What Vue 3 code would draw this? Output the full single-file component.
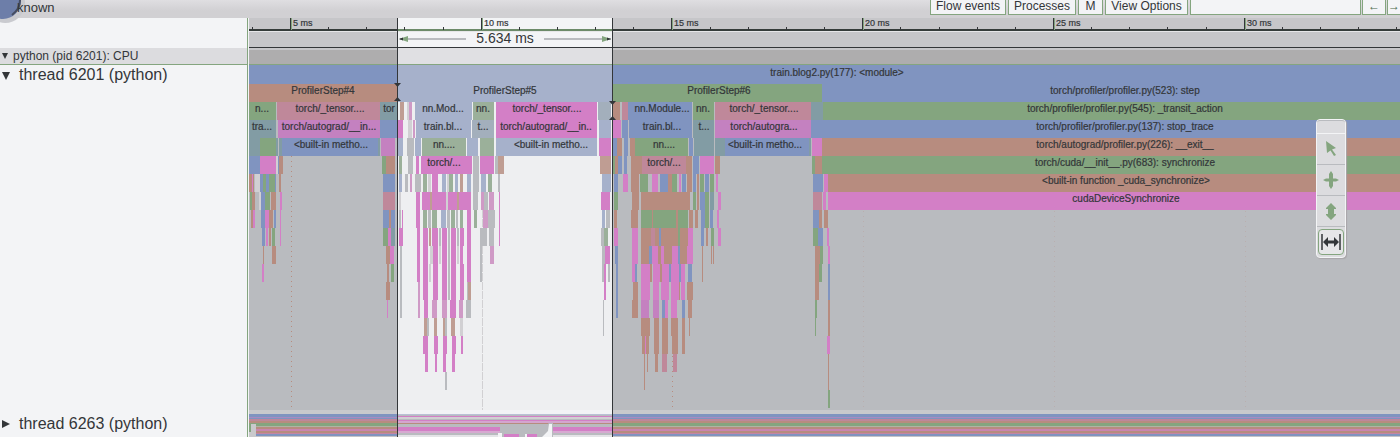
<script setup>
import { ref } from 'vue'

const originX = 249
const rowHeight = 18
const rowsTop = 66

const colors = {
  b: '#8094c0', g: '#84a57f', n: '#b78c7f', p: '#d37fc6',
  t: '#829ca4', o: '#bf889a', q: '#c481c0',
  B: '#a6b1cb', G: '#9bb09a', N: '#bf9d93', P: '#d37fc6', Q: '#cf9ac6', T: '#a3afbc',
  s: '#b9bbbf', l: '#d1d0d3', w: '#f3f4f6'
}

const rows = [
  'b249-397 B398-612 b613-4000',
  'n249-397 B398-612 g613-822 b822-4000',
  'g249-276 o277-380 t380-397 N400-404 l407-409 Q409-412 B415-472 G473-494 P496-597 T598-611 n613-620 s620-622 o622-628 b628-692 g693-714 o715-811 t811-823 g823-4000',
  't249-276 q278-380 b380-397 P398-403 l408-412 Q413-415 B416-471 T472-494 P496-597 B599-611 p613-621 b622-628 b629-692 t693-714 q715-811 b811-4000',
  't249-260 g260-276 t276-278 t279-380 b282-378 q381-395 B398-403 s407-414 B415-421 G422-466 B467-478 G480-494 B496-597 P599-611 b613-617 n617-622 b624-628 n630-640 g635-688 b689-693 t694-714 t715-811 b725-809 p812-822 n822-4000',
  'b249-260 p260-276 l276-278 b278-279 n279-283 n382-395 g382-386 G399-402 s408-413 P416-419 P421-472 s473-479 P480-494 s495-498 N498-504 N600-611 g613-615 n615-618 b618-622 b624-627 n631-692 o642-686 b693-699 p700-714 n715-720 g812-815 n815-822 g822-4000',
  'n249-254 p252-253 l255-260 b260-276 g263-266 g269-275 n279-281 b383-395 B399-402 s405-408 Q410-412 s415-421 G423-427 l428-431 P432-438 B442-446 l447-449 G449-453 B455-458 N460-463 B467-471 s473-479 B481-486 G488-492 s498-500 B602-611 b614-618 p623-628 n631-639 g640-648 p652-658 b660-668 n668-672 g672-677 p679-681 b682-686 n687-692 b693-696 n697-699 g700-704 b705-709 g710-714 p716-718 b813-823 p824-828 n828-4000',
  'g250-252 n252-255 l259-261 b261-265 g265-270 n271-276 p280-282 o383-395 l399-401 P416-420 P422-471 N430-432 l446-448 N457-459 s473-478 Q481-484 s484-488 Q489-494 P499-500 P601-610 g614-618 n632-639 n641-690 g693-696 n697-699 b700-705 g705-709 t710-714 p718-721 o813-822 p823-826 p828-4000',
  'n251-253 p253-255 b261-265 p265-269 n269-273 b274-276 p280-281 b383-395 n389-391 s399-401 P402-403 P416-420 G423-427 s428-431 G432-437 B441-446 s447-450 G451-455 s456-458 G460-463 P467-471 G474-477 Q483-488 s488-495 P499-500 B602-605 s606-610 n614-617 s617-619 n631-638 g641-688 n652-653 n676-678 n689-693 n695-698 b701-705 g705-709 b710-713 p717-719 b813-819 n819-822 n824-828',
  'b262-265 p266-268 n269-271 g272-275 p280-281 g383-388 p388-391 t391-395 P399-403 P417-420 P423-428 N429-431 P432-438 s439-441 P442-447 s448-450 P451-456 s457-459 P460-464 P467-471 s480-487 s489-494 P499-500 s601-604 G604-608 p614-618 p632-638 n641-688 o651-655 b659-661 g678-680 p688-693 b701-704 n706-708 g711-714 p718-721 g813-818 b818-823 p827-829',
  'n263-264 n272-276 n386-392 p390-394 s400-402 P417-420 P423-428 l430-433 P433-438 l439-441 P442-447 s448-450 P451-456 l457-459 P460-463 P467-471 s480-482 Q490-494 s602-605 P605-610 b615-618 p632-638 n641-688 p652-658 b649-652 p661-664 p672-678 b678-680 p687-693 n702-703 n711-712 n713-714 n815-820 g820-823 p828-830',
  'p262-264 n387-389 g391-394 s400-402 P417-420 P423-428 l429-431 P433-438 P442-447 s448-450 P451-456 P460-464 P467-471 s480-482 s602-606 P604-606 s608-610 b616-618 p632-635 b635-637 p641-650 n650-652 p653-660 n660-662 p662-669 b669-671 p671-679 b679-681 p681-685 b688-692 n702-703 n815-819 g819-822 b828-830',
  'n386-390 s400-402 Q418-420 P423-428 P433-438 P442-447 s448-450 P451-456 P460-464 s467-469 N468-471 P604-606 b616-618 n633-638 p641-650 p653-659 p661-669 p671-679 n679-680 p681-685 n687-693 n815-819 b828-830',
  'p387-388 s400-402 Q418-420 P424-428 Q432-437 Q442-447 P450-456 Q459-463 s466-471 s603-604 b616-618 n632-638 q641-649 q653-659 b662-665 p665-668 p671-677 b682-685 n688-692 g815-817 n828-830',
  'N424-427 s427-429 N434-437 N443-445 s445-447 N451-455 l460-463 s603-604 n641-650 n654-659 n662-668 n671-678 n682-685 n689-690 g815-816 n828-830',
  'P423-428 P434-438 P443-447 P452-456 P461-463 n642-649 p645-646 n654-659 n662-668 n672-678 n682-685 p827-830',
  'P425-428 P435-437 P443-446 P452-455 n644-645 n647-648 n655-658 o662-667 o673-677 n828-829',
  's445-447 n644-645 n828-829',
  'g828-830'
]

const slices = rows.flatMap((line, row) =>
  line.split(' ').map((token) => {
    const [x1, x2] = token.slice(1).split('-').map(Number)
    const y = row === 0 ? 65 : rowsTop + row * rowHeight
    return { x: x1, w: x2 - x1, y, h: row === 0 ? 19 : rowHeight, fill: colors[token[0]] }
  })
)

const titles = [
  [0, 837, 'train.blog2.py(177): <module>'],
  [1, 323, 'ProfilerStep#4'], [1, 505, 'ProfilerStep#5'], [1, 719, 'ProfilerStep#6'],
  [1, 1125, 'torch/profiler/profiler.py(523): step'],
  [2, 262, 'n...'], [2, 330, 'torch/_tensor....'], [2, 389, 'tor'],
  [2, 443, 'nn.Mod...'], [2, 483, 'nn.'], [2, 547, 'torch/_tensor....'],
  [2, 662, 'nn.Module...'], [2, 703, 'nn.'], [2, 764, 'torch/_tensor....'],
  [2, 1125, 'torch/profiler/profiler.py(545): _transit_action'],
  [3, 262, 'tra...'], [3, 329, 'torch/autograd/__in...'],
  [3, 443, 'train.bl...'], [3, 483, 't...'], [3, 546, 'torch/autograd/__in..'],
  [3, 662, 'train.bl...'], [3, 704, 't...'], [3, 764, 'torch/autogra...'],
  [3, 1125, 'torch/profiler/profiler.py(137): stop_trace'],
  [4, 331, '<built-in metho...'], [4, 444, 'nn....'], [4, 551, '<built-in metho...'],
  [4, 664, 'nn....'], [4, 765, '<built-in metho...'],
  [4, 1125, 'torch/autograd/profiler.py(226): __exit__'],
  [5, 444, 'torch/...'], [5, 664, 'torch/...'],
  [5, 1125, 'torch/cuda/__init__.py(683): synchronize'],
  [6, 1126, '<built-in function _cuda_synchronize>'],
  [7, 1126, 'cudaDeviceSynchronize']
].map(([row, x, text]) => ({ x, y: rowsTop + row * rowHeight + 10, text }))

const tickStep = 38.15
const ticks = Array.from({ length: 60 }, (_, i) => {
  const major = i % 5 === 1
  return { x: Math.round(252.8 + i * tickStep), major, label: major ? `${5 + (i - 1)} ms` : '' }
}).filter((t) => t.x < 1400 || !t.major)
const majors = ticks.filter((t) => t.major)
const gridColor = (x) => (x > 398 && x < 612 ? '#d1d0d3' : x < 700 ? '#b78c7f' : '#b9aeae')

const collapsedBands = [
  [410, 4, '#c9c9cc'], [414, 3, '#8094c0'], [417, 1, '#a98ac2'], [418, 1, '#8094c0'],
  [419, 2, '#bd889b'], [421, 2, '#b78c7f'], [423, 3, '#84a57f'], [426, 1, '#b0b3a4'],
  [427, 2, '#b78c7f'], [429, 2, '#c985b0'], [431, 2, '#b78c7f'], [433, 1, '#c485a4'],
  [434, 2, '#8094c0'], [436, 1, '#c4c4c8']
]
const selectedBands = [
  [410, 4, '#f3f4f6'], [414, 1, '#b9c1d6'], [415, 1, '#b9bbbf'], [416, 1, '#d37fc6'], [417, 2, '#d1d0d3'],
  [419, 1, '#b9bbbf'], [420, 1, '#d37fc6'], [421, 2, '#d3a6ce'], [423, 1, '#b78c7f'],
  [424, 3, '#b9bbbf'], [427, 4, '#d37fc6'], [431, 2, '#d6aad1'], [433, 2, '#b9bbbf'], [435, 2, '#e4e4e7']
]

const search = ref('')
const mode = ref('timing')
</script>

<template>
  <main class="viewer">
    <header class="toolbar">
      <svg class="badge" width="26" height="24" aria-hidden="true">
        <circle cx="5" cy="3" r="20" fill="#c9cacf" />
        <ellipse cx="3" cy="0" rx="18" ry="19" fill="#6d7ea9" />
        <path d="M20 0Q20 9 12 15" fill="none" stroke="#444c61" stroke-width="2" />
      </svg>
      <span class="title">known</span>
      <nav class="actions">
        <button type="button" class="flow">Flow events</button>
        <button type="button" class="processes">Processes</button>
        <button type="button" class="metadata">M</button>
        <button type="button" class="options">View Options</button>
        <input v-model="search" type="text" aria-label="Search" />
        <button type="button" class="previous" aria-label="Previous match">←</button>
        <button type="button" class="next" aria-label="Next match">→</button>
      </nav>
    </header>

    <section class="row ruler-row">
      <div class="label"></div>
      <svg class="chart" height="30" role="img" aria-label="Time ruler">
        <g :transform="`translate(${-originX} -18)`">
          <rect x="249" y="18" width="4000" height="30" fill="#c6c6c9" />
          <rect x="398" y="18" width="214" height="29" fill="#f3f4f6" />
          <rect x="249" y="31" width="4000" height="1" fill="#e6e6e8" />
          <rect x="249" y="29" width="4000" height="2" fill="#353c3a" />
          <rect x="398" y="29" width="214" height="2" fill="#6c8a69" />
          <g v-for="t in ticks" :key="t.x">
            <rect :x="t.x - 1" :y="t.major ? 18 : 27" width="1" :height="t.major ? 12 : 3" fill="#333639" />
            <rect v-if="t.major" :x="t.x" y="18" width="1" height="12" fill="#84a57f" />
            <text v-if="t.major" :x="t.x + 2" y="26" class="tick">{{ t.label }}</text>
          </g>
          <path d="M400 39H466M544 39H611" stroke="#b9bbbf" stroke-width="2" />
          <path d="M399 39L408 36V42ZM611 39L602 36V42Z" fill="#84a57f" />
          <path d="M399 39L403 37.500V40.500ZM611 39L607 37.500V40.500Z" fill="#333639" />
          <text x="505" y="43" class="interval">5.634 ms</text>
          <rect x="249" y="47" width="4000" height="1" fill="#333639" />
          <path d="M397.500 18V48M612.500 18V48" stroke="#333639" />
        </g>
      </svg>
    </section>

    <section class="row process-row">
      <button type="button" class="label process"><i class="open"></i>python (pid 6201): CPU</button>
      <svg class="chart" height="17" aria-hidden="true">
        <g :transform="`translate(${-originX} -48)`">
          <rect x="249" y="48" width="4000" height="16" fill="#aeadae" />
          <rect x="249" y="48" width="4000" height="2" fill="#c6c6c9" />
          <rect x="398" y="48" width="214" height="16" fill="#e0e0e3" />
          <rect x="249" y="64" width="4000" height="1" fill="#84a57f" />
          <path d="M397.500 48V65M612.500 48V65" stroke="#333639" />
        </g>
      </svg>
    </section>

    <section class="row thread-row">
      <button type="button" class="label thread"><i class="open"></i>thread 6201 (python)</button>
      <svg class="chart" height="345" role="img" aria-label="Slices of thread 6201">
        <g :transform="`translate(${-originX} -65)`">
          <rect x="249" y="65" width="4000" height="345" fill="#b9bbbf" />
          <rect x="398" y="65" width="214" height="345" fill="#eeeff1" />
          <path v-for="t in majors" :key="t.x" :d="`M${t.x + 0.5} 156V410`" :stroke="gridColor(t.x)" :stroke-dasharray="t.x > 398 && t.x < 612 ? '8 1' : '1 4'" />
          <g shape-rendering="crispEdges">
            <rect v-for="(s, i) in slices" :key="i" :x="s.x" :y="s.y" :width="s.w" :height="s.h" :fill="s.fill" />
          </g>
          <text v-for="(t, i) in titles" :key="i" :x="t.x" :y="t.y" class="slice">{{ t.text }}</text>
          <path d="M397.500 65V410M612.500 65V410" stroke="#333639" />
          <path d="M394 83H401L397.500 87ZM394 101H401L397.500 97ZM609 101H616L612.500 105ZM609 120H616L612.500 116Z" fill="#333639" />
        </g>
      </svg>
    </section>

    <section class="row collapsed-row">
      <button type="button" class="label thread"><i class="closed"></i>thread 6263 (python)</button>
      <svg class="chart" height="27" role="img" aria-label="Slices of thread 6263">
        <g :transform="`translate(${-originX} -410)`">
          <rect v-for="b in collapsedBands" :key="b[0]" x="249" :y="b[0]" width="4000" :height="b[1]" :fill="b[2]" />
          <path d="M249 424H256V437H249Z" fill="#c9c9cc" />
          <rect x="249" y="424" width="2" height="8" fill="#84a57f" />
          <rect v-for="b in selectedBands" :key="b[0]" x="398" :y="b[0]" width="214" :height="b[1]" :fill="b[2]" />
          <path d="M500 427H545L549 423H553V437H500Z" fill="#b9bbbf" />
          <path d="M504 434H519V437H504ZM527 434H537V437H527Z" fill="#d37fc6" />
          <path d="M549 424H552V437H542L548 431ZM525 434H527V437H525ZM498 433H502V437H498Z" fill="#f3f4f6" />
          <path d="M397.500 410V437M612.500 410V437" stroke="#333639" />
        </g>
      </svg>
    </section>

    <aside class="palette" aria-label="Mouse mode">
      <div class="grip"></div>
      <button type="button" aria-label="Selection mode" @click="mode = 'select'">
        <svg width="26" height="26" viewBox="0 0 26 26"><path d="M8 5L18 12L14 13.500L18 19L16 20L12.500 14.500L9 17Z" fill="#84a57f" /></svg>
      </button>
      <button type="button" aria-label="Pan mode" @click="mode = 'pan'">
        <svg width="26" height="26" viewBox="0 0 26 26"><path d="M13 4L15 7V11.500H18L21 13L18 14.500H15V19L13 22L11 19V14.500H8L5 13L8 11.500H11V7Z" fill="#84a57f" /></svg>
      </button>
      <button type="button" aria-label="Zoom mode" @click="mode = 'zoom'">
        <svg width="26" height="26" viewBox="0 0 26 26"><path d="M13 5L18 10V11H16V16H18V17L13 22L8 17V16H10V11H8V10Z" fill="#84a57f" /></svg>
      </button>
      <button type="button" aria-label="Timing mode" :class="{ active: mode === 'timing' }" @click="mode = 'timing'">
        <svg width="24" height="24" viewBox="0 1 24 24"><path d="M3 5V21M21 5V21" stroke="#333639" stroke-width="1.500" /><path d="M4 13L9 8V11.500H15V8L20 13L15 18V14.500H9V18Z" fill="#333639" /></svg>
      </button>
    </aside>
  </main>
</template>

<style>
body { margin: 0; background: #f3f4f6; }
</style>

<style scoped>
.viewer {
  position: relative;
  overflow: hidden;
  background: #f3f4f6;
  color: #333639;
  font-family: "Liberation Sans", Arial, sans-serif;
}
button, input { font: inherit; color: inherit; margin: 0; border-radius: 0; }
.toolbar {
  display: flex;
  align-items: flex-start;
  justify-content: space-between;
  height: 18px;
  background: linear-gradient(#dfdee1, #d1d0d3 60%);
}
.badge { position: absolute; left: 0; top: 0; z-index: 1; }
.title { position: relative; z-index: 2; padding-left: 17px; font-size: 13px; line-height: 15px; }
.actions { display: flex; gap: 2px; height: 15px; font-size: 12px; }
.actions button {
  box-sizing: border-box;
  height: 15px;
  padding: 0 0 1px;
  line-height: 13px;
  border: 1px solid #84a57f;
  border-top: 0;
  background: #f3f4f6;
  text-align: center;
  white-space: nowrap;
}
.actions .flow { width: 76px; }
.actions .processes { width: 68px; }
.actions .metadata { width: 25px; }
.actions .options { width: 83px; }
.actions .previous { width: 24px; margin-left: -1px; color: #4c6b4c; }
.actions .next { width: 13px; margin-left: -1px; border-right: 0; color: #4c6b4c; }
.actions input {
  box-sizing: border-box;
  width: 171px;
  height: 15px;
  padding: 0 4px;
  border: 1px solid #84a57f;
  border-top: 0;
  background: #f3f4f6;
}
.row { display: flex; }
.label {
  box-sizing: border-box;
  flex: 0 0 248px;
  border: 0;
  border-right: 1px solid #84a57f;
  background: #f3f4f6;
  margin-right: 1px;
  text-align: left;
}
.chart { display: block; flex: 1; min-width: 0; overflow: hidden; }
.process {
  display: flex;
  align-items: center;
  gap: 5px;
  padding: 0 0 0 2px;
  background: #dcdcdf;
  border-bottom: 1px solid #84a57f;
  font-size: 12px;
  line-height: 16px;
}
.thread {
  display: flex;
  align-items: flex-start;
  gap: 9px;
  padding: 0 0 0 2px;
  font-size: 16px;
  line-height: 20px;
}
.collapsed-row .thread { padding-top: 4px; }
.open { border: solid transparent; border-width: 6px 3px 0; border-top-color: #333639; }
.closed { border: solid transparent; border-width: 4px 0 4px 8px; border-left-color: #333639; }
.thread .open { margin-top: 7px; border-width: 8px 4px 0; }
.thread .closed { margin-top: 6px; }
.tick { font-size: 9px; fill: #333639; stroke: #333639; stroke-width: 0.2px; }
.interval { font-size: 14px; fill: #333639; text-anchor: middle; }
.slice { font-size: 10px; fill: #333639; text-anchor: middle; stroke: #333639; stroke-width: 0.2px; }
.palette {
  position: absolute;
  top: 119px;
  right: 54px;
  width: 30px;
  box-sizing: border-box;
  border: 1px solid #f3f4f6;
  border-radius: 4px;
  background: #dcdcdf;
  box-shadow: 1px 1px 1px #a9a6a9;
}
.grip { height: 12px; border-top: 1px solid #b9bbbf; border-bottom: 1px solid #f3f4f6; border-radius: 3px 3px 0 0; }
.palette button {
  display: flex;
  align-items: center;
  justify-content: center;
  width: 100%;
  height: 31px;
  box-sizing: border-box;
  padding: 0;
  border: 0;
  border-bottom: 1px solid #b9bbbf;
  background: transparent;
}
.palette button.active {
  width: 26px;
  height: 26px;
  margin: 2px auto;
  border: 1px solid #84a57f;
  border-radius: 4px;
  background: #e6e6e8;
}
</style>
